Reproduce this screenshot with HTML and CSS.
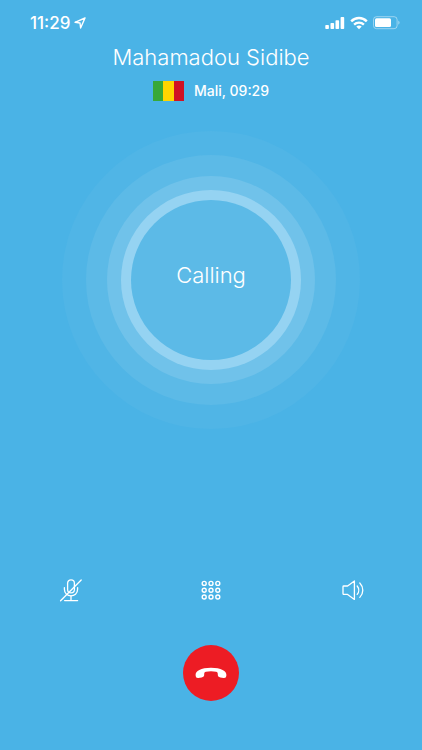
FILE: index.html
```
<!DOCTYPE html>
<html lang="en">
<head>
    <meta charset="UTF-8">
    <meta name="viewport" content="width=device-width, initial-scale=1.0">
    <title>Calling</title>
    <link rel="stylesheet" href="styles.css">
</head>
<body>

    <div class="status-bar">
        <div class="status-time">
            <span>11:29</span>
            <svg width="12" height="12" viewBox="0 0 12 12" fill="none" stroke="currentColor" stroke-width="1.4" stroke-linejoin="round">
                <path d="M11 1 L1 5.3 L6 6 L6.6 11 Z"/>
            </svg>
        </div>
        <div class="status-icons">
            <svg width="20" height="14" viewBox="0 0 20 14" fill="currentColor">
                <rect x="0.3" y="9" width="3.6" height="4" rx="0.8"/>
                <rect x="5.5" y="7" width="3.6" height="6" rx="0.8"/>
                <rect x="10.5" y="4.2" width="3.6" height="8.8" rx="0.8"/>
                <rect x="15.6" y="1" width="3.6" height="12" rx="0.8"/>
            </svg>
            <svg width="18" height="14" viewBox="0 0 18 14" fill="none" stroke="currentColor" stroke-width="2.4">
                <path d="M1.2 5.4 C5.6 0.9 12.4 0.9 16.8 5.4"/>
                <path d="M4.1 8.6 C6.9 5.9 11.1 5.9 13.9 8.6"/>
                <path d="M9 13.2 L6.3 10.6 C7.8 9.2 10.2 9.2 11.7 10.6 Z" fill="currentColor" stroke="none"/>
            </svg>
            <svg width="27" height="14" viewBox="0 0 27 14">
                <rect x="0.5" y="0.7" width="23.6" height="12" rx="3" fill="none" stroke="currentColor" stroke-opacity="0.45"/>
                <rect x="2" y="2.3" width="16" height="8.8" rx="1.5" fill="currentColor"/>
                <path d="M25.3 4.6 C27 5.4 27 8 25.3 8.8 Z" fill="currentColor" fill-opacity="0.5"/>
            </svg>
        </div>
    </div>

    <div class="caller">
        <h1 class="caller-name">Mahamadou Sidibe</h1>
        <div class="caller-place">
            <div class="flag">
                <span class="flag-green"></span>
                <span class="flag-yellow"></span>
                <span class="flag-red"></span>
            </div>
            <span>Mali, 09:29</span>
        </div>
    </div>

    <div class="call-ring">
        <span>Calling</span>
    </div>

    <div class="controls">
        <button class="control-btn" type="button" aria-label="Mute">
            <svg width="24" height="24" viewBox="-1 0 24 24" fill="none" stroke="currentColor" stroke-width="1.3" stroke-linecap="round">
                <rect x="8.6" y="1.8" width="6.8" height="13" rx="3.4"/>
                <path d="M5.4 9.6 V11.2 C5.4 20 18.6 20 18.6 11.2 V9.6"/>
                <path d="M12 17.9 V22.4 M5.6 22.6 H18.6"/>
                <path d="M1.6 22.8 L22.2 2"/>
            </svg>
        </button>
        <button class="control-btn" type="button" aria-label="Keypad">
            <svg width="24" height="24" viewBox="0 0 24 24" fill="none" stroke="currentColor" stroke-width="1.4">
                <circle cx="5.2" cy="5.4" r="2"/>
                <circle cx="12" cy="5.4" r="2"/>
                <circle cx="18.8" cy="5.4" r="2"/>
                <circle cx="5.2" cy="12.2" r="2"/>
                <circle cx="12" cy="12.2" r="2"/>
                <circle cx="18.8" cy="12.2" r="2"/>
                <circle cx="5.2" cy="19" r="2"/>
                <circle cx="12" cy="19" r="2"/>
                <circle cx="18.8" cy="19" r="2"/>
            </svg>
        </button>
        <button class="control-btn" type="button" aria-label="Speaker">
            <svg width="24" height="24" viewBox="-1 0 24 24" fill="none" stroke="currentColor" stroke-width="1.3" stroke-linecap="round" stroke-linejoin="round">
                <path d="M2.8 8 H6.6 L13.4 3 V21.4 L6.6 16.4 H2.8 C2.3 16.4 2 16.1 2 15.6 V8.8 C2 8.3 2.3 8 2.8 8 Z"/>
                <path d="M16.2 8 C18.2 10.4 18.2 14 16.2 16.4"/>
                <path d="M18.8 5 C22.8 9.2 22.8 15.2 18.8 19.4"/>
            </svg>
        </button>
    </div>

    <button class="hangup-btn" type="button" aria-label="End call">
        <svg width="32" height="12" viewBox="0 0 32 12" fill="currentColor">
            <path d="M0.6 8.2 C0.2 4.2 6 0.8 16 0.8 C26 0.8 31.8 4.2 31.4 8.2 C31.2 10.6 30.4 11 28.6 10.9 L25.4 10.5 C23.4 10.2 22.8 9.4 22.8 7.6 C22.8 5.6 22.4 5.2 21 4.8 C18.2 4 13.8 4 11 4.8 C9.6 5.2 9.2 5.6 9.2 7.6 C9.2 9.4 8.6 10.2 6.6 10.5 L3.4 10.9 C1.6 11 0.8 10.6 0.6 8.2 Z"/>
        </svg>
    </button>

</body>
</html>
```

FILE: styles.css
```
* {
    margin: 0;
    padding: 0;
    box-sizing: border-box;
    font-family: Inter, "Liberation Sans", sans-serif;
}

body {
    min-height: 100vh;
    display: flex;
    flex-direction: column;
    align-items: center;
    background-color: #4ab3e6;
    color: white;
}

svg {
    display: block;
}

button {
    display: flex;
    align-items: center;
    justify-content: center;
    border: none;
    background: none;
    color: white;
    cursor: pointer;
}

.status-bar {
    width: 100%;
    padding: 13px 22px 0 30px;
    display: flex;
    align-items: center;
    justify-content: space-between;
}

.status-time {
    display: flex;
    align-items: center;
    gap: 4px;
    font-size: 17px;
    line-height: 20px;
    font-weight: 500;
}

.status-icons {
    display: flex;
    align-items: center;
    gap: 5px;
}

.caller {
    padding-top: 8px;
    text-align: center;
}

.caller-name {
    font-size: 22px;
    line-height: 32px;
    font-weight: 300;
}

.caller-place {
    display: flex;
    align-items: center;
    justify-content: center;
    gap: 10px;
    margin-top: 8px;
    font-size: 14px;
    line-height: 20px;
    font-weight: 500;
}

.flag {
    display: flex;
    width: 31px;
    height: 20px;
}

.flag span {
    flex: 1;
}

.flag-green {
    background: #38a838;
}

.flag-yellow {
    background: #ffd500;
}

.flag-red {
    background: #d01224;
}

/* rings go outwards from the 160px circle, last one reaches 69px */
.call-ring {
    width: 160px;
    height: 160px;
    margin: 99px 69px 69px;
    padding-bottom: 10px;
    display: flex;
    align-items: center;
    justify-content: center;
    border-radius: 50%;
    background: #5cbae7;
    box-shadow:
        0 0 0 10px #95d3f2,
        0 0 0 24px #70c2ea,
        0 0 0 45px #5cbae7,
        0 0 0 69px #50b5e6;
    font-size: 22px;
    font-weight: 300;
}

.controls {
    width: 100%;
    margin-top: auto;
    padding: 0 48px;
    display: flex;
    justify-content: space-between;
}

.control-btn {
    width: 44px;
    height: 44px;
}

.hangup-btn {
    width: 56px;
    height: 56px;
    margin: 33px 0 49px;
    border-radius: 50%;
    background: #ed1c24;
}
```
